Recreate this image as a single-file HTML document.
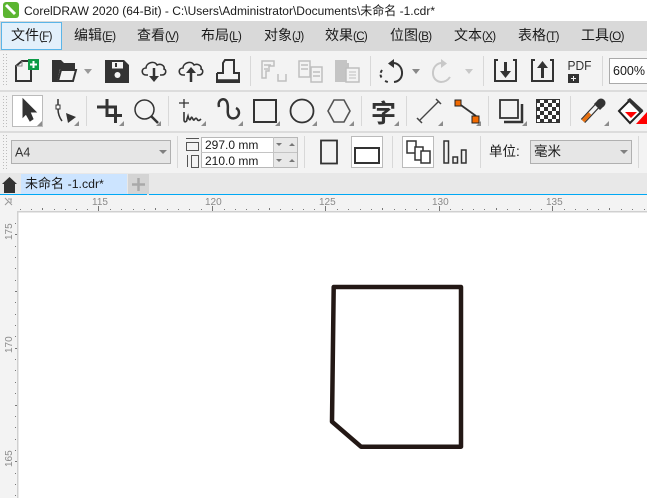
<!DOCTYPE html>
<html><head><meta charset="utf-8">
<style>
html,body{margin:0;padding:0;width:647px;height:498px;overflow:hidden;background:#fff}
svg{display:block}
text{font-family:"Liberation Sans","Noto Sans CJK SC",sans-serif;fill:#1a1a1a}
.m{font-size:14px}
.m tspan{font-size:11.5px;letter-spacing:-.6px}
.r{font-size:10px;fill:#8a8a8a}
</style></head><body>
<svg width="647" height="498" viewBox="0 0 647 498" xmlns="http://www.w3.org/2000/svg">
<defs>
<g id="c"><path d="M0 0h-5l5-5z" fill="#8c8c8c"/></g>
<pattern id="grip" width="3" height="3" patternUnits="userSpaceOnUse"><rect width="1" height="1" fill="#bdbdbd"/></pattern>
<pattern id="chk" x="536" y="99" width="8" height="8" patternUnits="userSpaceOnUse"><rect width="8" height="8" fill="#fff"/><rect width="4" height="4" fill="#333"/><rect x="4" y="4" width="4" height="4" fill="#333"/></pattern>
</defs>
<!-- title -->
<rect width="647" height="21" fill="#fff"/>
<rect x="3" y="2" width="16" height="16" rx="3" fill="#5cb531"/>
<path d="M6 5l9 9" stroke="#fff" stroke-width="3"/>
<text x="24" y="15" font-size="12.3" textLength="411" lengthAdjust="spacingAndGlyphs">CorelDRAW 2020 (64-Bit) - C:\Users\Administrator\Documents\未命名 -1.cdr*</text>
<!-- menu -->
<rect y="21" width="647" height="30" fill="#d9d9d9"/>
<rect x="1.500" y="22.500" width="60" height="27" fill="#e3f0fb" stroke="#5bb5e8"/>
<text class="m" x="11" y="40">文件<tspan>(F)</tspan></text>
<text class="m" x="74" y="40">编辑<tspan>(E)</tspan></text>
<text class="m" x="137" y="40">查看<tspan>(V)</tspan></text>
<text class="m" x="201" y="40">布局<tspan>(L)</tspan></text>
<text class="m" x="264" y="40">对象<tspan>(J)</tspan></text>
<text class="m" x="325" y="40">效果<tspan>(C)</tspan></text>
<text class="m" x="390" y="40">位图<tspan>(B)</tspan></text>
<text class="m" x="454" y="40">文本<tspan>(X)</tspan></text>
<text class="m" x="518" y="40">表格<tspan>(T)</tspan></text>
<text class="m" x="581" y="40">工具<tspan>(O)</tspan></text>
<path d="M41 41.500h6M105 41.500h6M168 41.500h7M232 41.500h5M295 41.500h4M356 41.500h8M421 41.500h7M485 41.500h7M549 41.500h6M612 41.500h9" stroke="#333" stroke-width="1"/>
<!-- toolbars bg -->
<rect y="51" width="647" height="122" fill="#f3f3f3"/>
<rect y="90" width="647" height="2" fill="#dcdcdc"/>
<rect y="131" width="647" height="2" fill="#dcdcdc"/>
<rect x="3" y="54" width="5" height="32" fill="url(#grip)"/>
<rect x="3" y="94" width="5" height="34" fill="url(#grip)"/>
<rect x="3" y="135" width="5" height="34" fill="url(#grip)"/>
<g stroke="#d8d8d8" stroke-width="1">
<path d="M250.500 56v30M370.500 56v30M483.500 56v30M602.500 56v30M86.500 96v30M168.500 96v30M361.500 96v30M406.500 96v30M488.500 96v30M570.500 96v30M177.500 136v32M304.500 136v32M392.500 136v32M480.500 136v32M638.500 136v32"/>
</g>
<!-- new -->
<path d="M16 81V66l6-5h9v20z" fill="none" stroke="#333" stroke-width="2"/>
<path d="M22 61v5h-6" fill="none" stroke="#888" stroke-width="1"/>
<rect x="28" y="59" width="11" height="11" fill="#0d9b46"/>
<path d="M33.500 61v7M30 64.500h7" stroke="#fff" stroke-width="2"/>
<!-- open -->
<path d="M52 82V60h9l3 3h11v6H60l-3 13z" fill="#333"/>
<path d="M58 81l3-11h15l-3 11z" fill="#f3f3f3" stroke="#333" stroke-width="2"/>
<path d="M84 69h8l-4 5z" fill="#999"/>
<!-- save -->
<path d="M105 60h19l5 5v18h-24z" fill="#333"/>
<rect x="112" y="62" width="11" height="6.500" fill="#f3f3f3"/><rect x="115" y="63" width="2" height="4" fill="#333"/>
<circle cx="117.500" cy="75" r="3" fill="#f3f3f3"/>
<!-- clouds -->
<g fill="none" stroke="#333" stroke-width="1.600"><path d="M148 75h-2c-5 0-5-7 0-7 0-5 8-8 11-3 4-2 8 1 7 4 3 1 2 6-2 6h-2"/></g>
<path d="M154 68v9" stroke="#333" stroke-width="2.500"/><path d="M149 76h10l-5 6z" fill="#333"/>
<g fill="none" stroke="#333" stroke-width="1.600"><path d="M185 75h-2c-5 0-5-7 0-7 0-5 8-8 11-3 4-2 8 1 7 4 3 1 2 6-2 6h-2"/></g>
<path d="M191 72v10" stroke="#333" stroke-width="2.500"/><path d="M186 73h10l-5-6z" fill="#333"/>
<!-- publish -->
<path d="M217 73v9h22v-9h-5V60h-9l-2 3v10h-6" fill="none" stroke="#333" stroke-width="2"/>
<path d="M217 80.500h22" stroke="#333" stroke-width="2.500"/>
<!-- disabled -->
<g fill="none" stroke="#bfbfbf" stroke-width="1.500">
<path d="M262 61h12v5h-5v5h-3v7h-4z"/><path d="M264 65h7M264 69h4"/>
<path d="M278 74v7h8v-7"/>
<path d="M299 61h11v16h-11zM311 67h11v15h-11z"/><path d="M301 65h7M301 69h7M313 72h7M313 76h7"/>
</g>
<path d="M335 60h12v3h2v19h-14z" fill="#c4c4c4"/><rect x="346" y="68" width="13" height="14" fill="#f3f3f3" stroke="#bfbfbf" stroke-width="1.500"/>
<path d="M349 72h7M349 75h7M349 78h7" stroke="#bfbfbf"/>
<!-- undo -->
<path d="M392 63c12-1 14 18 2 19" fill="none" stroke="#333" stroke-width="2"/>
<path d="M394 59v9l-6-4.500z" fill="#333"/>
<path d="M382 70c-2 3-2 6 0 8M385 81l4 1.500" fill="none" stroke="#333" stroke-width="2" stroke-dasharray="3 2"/>
<path d="M412 69h8l-4 5z" fill="#888"/>
<path d="M443 63c-12-1-14 18-2 19 4 0 7-2 9-5" fill="none" stroke="#c8c8c8" stroke-width="2"/>
<path d="M441 59v9l6-4.500z" fill="#c8c8c8"/>
<path d="M465 69h8l-4 5z" fill="#c8c8c8"/>
<!-- import/export -->
<path d="M498 60h-3v21h21V60h-3M535 60h-3v21h21V60h-3" fill="none" stroke="#333" stroke-width="2"/>
<path d="M505.500 62v10" stroke="#333" stroke-width="3"/><path d="M500 71h11l-5.500 7z" fill="#333"/>
<path d="M542.500 78V68" stroke="#333" stroke-width="3"/><path d="M537 68h11l-5.500-7z" fill="#333"/>
<text x="567.500" y="70" font-size="13" textLength="24" lengthAdjust="spacingAndGlyphs" style="fill:#333">PDF</text>
<path d="M568 74h11v9h-11z" fill="#333"/><path d="M573.500 76v5M571 78.500h5" stroke="#f3f3f3"/>
<!-- zoom box -->
<rect x="609.500" y="58.500" width="40" height="25" fill="#fff" stroke="#aaa"/>
<text x="613" y="75" font-size="12.500">600%</text>
<!-- tool row -->
<rect x="12.500" y="95.500" width="30" height="31" fill="#fff" stroke="#bbb"/>
<path d="M23 99l13 13h-6l3 7-3 2-4-7-3 3z" fill="#333" stroke="#333"/>
<use href="#c" x="42" y="126"/>
<rect x="56" y="105" width="4" height="4" fill="#fff" stroke="#333"/>
<path d="M58 99v6M58 109c0 4 1 8 4 12" fill="none" stroke="#333" stroke-width="1.500"/>
<path d="M66 113l10 4-8 6z" fill="#333"/>
<use href="#c" x="79" y="126"/>
<path d="M97 107h18.500v16M107 99v16.500h15" fill="none" stroke="#333" stroke-width="3"/>
<use href="#c" x="124" y="126"/>
<circle cx="144.500" cy="109.500" r="9.500" fill="none" stroke="#333" stroke-width="1.500"/>
<path d="M151 116l7 7" stroke="#333" stroke-width="2.500"/>
<use href="#c" x="161" y="126"/>
<path d="M179 103h10M184 99v9" stroke="#333" stroke-width="1.300"/>
<path d="M184 112v8c0 3 3 2 3-1l1-3c1 4 2 5 3 2 1-3 2 3 3 2s2-3 3-1 2 2 4 0" fill="none" stroke="#333" stroke-width="1.600"/>
<use href="#c" x="206" y="126"/>
<path d="M219 107c-2-8 6-10 8-5 2 5 0 8 1 12 1 6 10 6 11-1 0-2-1-4-3-5" fill="none" stroke="#333" stroke-width="2.500"/>
<use href="#c" x="243" y="126"/>
<rect x="254" y="100" width="22" height="22" fill="none" stroke="#333" stroke-width="2"/>
<use href="#c" x="280" y="126"/>
<circle cx="302" cy="111" r="11.500" fill="none" stroke="#333" stroke-width="1.800"/>
<use href="#c" x="317" y="126"/>
<path d="M334 100h10l6 11-6 11h-10l-6-11z" fill="none" stroke="#555" stroke-width="1.600"/>
<use href="#c" x="354" y="126"/>
<text x="371" y="122" font-size="25" font-weight="700" style="fill:#333">字</text>
<use href="#c" x="399" y="126"/>
<path d="M420 120l19-19" stroke="#444" stroke-width="1.300"/><path d="M417 118l5 5M436 99l5 5" stroke="#444" stroke-width="1.500"/>
<use href="#c" x="443" y="126"/>
<path d="M458 103l18 13" stroke="#333" stroke-width="1.800"/>
<rect x="455" y="100" width="6" height="6" fill="#f26a00" stroke="#222"/>
<rect x="472" y="116" width="7" height="7" fill="#f26a00" stroke="#222"/>
<use href="#c" x="481" y="126"/>
<rect x="500" y="100" width="18" height="18" fill="none" stroke="#333" stroke-width="1.800"/>
<path d="M522 104v18h-18" fill="none" stroke="#333" stroke-width="2.500"/>
<use href="#c" x="527" y="126"/>
<rect x="536" y="99" width="24" height="24" fill="url(#chk)"/>
<rect x="536.500" y="99.500" width="23" height="23" fill="none" stroke="#333"/>
<path d="M583 121l15-16" stroke="#333" stroke-width="6"/>
<path d="M583 121l15-16" stroke="#f3f3f3" stroke-width="3.500"/>
<path d="M583 121l7-7.500" stroke="#e8700f" stroke-width="3.500"/>
<circle cx="601" cy="103" r="4.500" fill="#333"/>
<path d="M594 104l4-4 6 6-4 4z" fill="#333"/>
<use href="#c" x="609" y="126"/>
<path d="M619 111l11-11 12 11-12 12z" fill="#fff" stroke="#222" stroke-width="2"/>
<path d="M627 100l3-2 13 12-3 3z" fill="#333"/>
<path d="M625 112h12l-6 6z" fill="#f00"/>
<path d="M647 112v12h-11z" fill="#f00"/>
<!-- row 3 -->
<rect x="11.500" y="140.500" width="159" height="23" fill="#e6e6e6" stroke="#b0b0b0"/>
<text x="15" y="156.500" font-size="12.500" style="fill:#333">A4</text>
<path d="M159 150h8l-4 4z" fill="#808080"/>
<path d="M186 138.500h13" stroke="#555"/><rect x="186.500" y="142.500" width="12" height="8" fill="none" stroke="#555" stroke-width="1"/>
<path d="M187.500 155v12" stroke="#555"/><rect x="191.500" y="155.500" width="7" height="12" fill="none" stroke="#555"/>
<rect x="201.500" y="137.500" width="96" height="30" fill="#e8e8e8" stroke="#b8b8b8"/>
<rect x="202" y="138" width="71" height="29" fill="#fff"/>
<path d="M201 152.500h96M273.500 137v31" stroke="#c4c4c4"/>
<text x="205" y="149" font-size="12">297.0 mm</text>
<text x="205" y="165" font-size="12">210.0 mm</text>
<path d="M276 143h6l-3 3zM289 146h6l-3-3zM276 159h6l-3 3zM289 162h6l-3-3z" fill="#777"/>
<rect x="321" y="140.500" width="16" height="23" fill="none" stroke="#333" stroke-width="1.800"/>
<rect x="351.500" y="136.500" width="31" height="31" fill="#fff" stroke="#bbb"/>
<rect x="355" y="148" width="24" height="15" fill="none" stroke="#333" stroke-width="2"/>
<rect x="402.500" y="136.500" width="31" height="31" fill="#fff" stroke="#bbb"/>
<rect x="407" y="141" width="9" height="12" fill="#fff" stroke="#333" stroke-width="1.500"/>
<rect x="415" y="147" width="8" height="13" fill="#fff" stroke="#333" stroke-width="1.500"/>
<rect x="421" y="151" width="9" height="12" fill="#fff" stroke="#333" stroke-width="1.500"/>
<rect x="444" y="141" width="4.500" height="22" fill="none" stroke="#333" stroke-width="1.500"/>
<rect x="453" y="157" width="4.500" height="6" fill="none" stroke="#333" stroke-width="1.500"/>
<rect x="461.500" y="150" width="4.500" height="13" fill="none" stroke="#333" stroke-width="1.500"/>
<text x="489" y="156" font-size="13.500">单位:</text>
<rect x="530.500" y="140.500" width="101" height="23" fill="#e6e6e6" stroke="#b0b0b0"/>
<text x="534" y="156" font-size="13.500">毫米</text>
<path d="M620 150h8l-4 4z" fill="#808080"/>
<!-- tabs -->
<rect y="173" width="647" height="22" fill="#e8e8e8"/>
<path d="M2 184l7.500-7 7.500 7h-2v9H4v-9z" fill="#333"/>
<rect x="21" y="174" width="106" height="20" fill="#cce4ff"/>
<rect x="128" y="174" width="21" height="20" fill="#d4d4d4"/>
<path d="M138.500 178v13M132 184.500h13" stroke="#a9a9a9" stroke-width="2.500"/>
<text x="25" y="188" font-size="13">未命名 <tspan font-size="12.300">-1.cdr*</tspan></text>
<rect y="194" width="147" height="1" fill="#00a8f4"/><rect x="149" y="194" width="498" height="1" fill="#00a8f4"/>
<!-- rulers -->
<rect y="195" width="647" height="17" fill="#f3f3f3"/>
<rect y="195" width="18" height="303" fill="#f3f3f3"/>
<rect x="17" y="211" width="630" height="1.500" fill="#d0d0d0"/>
<rect x="17" y="211" width="1.500" height="287" fill="#d0d0d0"/>
<path d="M5 198l7 7M5 205l4-4M8 199h4M11 199v4" stroke="#999" stroke-width="1" fill="none"/>
<g fill="#777">
<path d="M20 209h1v1h-1zM31 209h1v1h-1zM54 209h1v1h-1zM65 209h1v1h-1zM76 209h1v1h-1zM87 209h1v1h-1zM110 209h1v1h-1zM121 209h1v1h-1zM133 209h1v1h-1zM144 209h1v1h-1zM167 209h1v1h-1zM178 209h1v1h-1zM189 209h1v1h-1zM201 209h1v1h-1zM224 209h1v1h-1zM235 209h1v1h-1zM246 209h1v1h-1zM258 209h1v1h-1zM280 209h1v1h-1zM292 209h1v1h-1zM303 209h1v1h-1zM314 209h1v1h-1zM337 209h1v1h-1zM348 209h1v1h-1zM360 209h1v1h-1zM371 209h1v1h-1zM394 209h1v1h-1zM405 209h1v1h-1zM416 209h1v1h-1zM428 209h1v1h-1zM450 209h1v1h-1zM462 209h1v1h-1zM473 209h1v1h-1zM484 209h1v1h-1zM507 209h1v1h-1zM519 209h1v1h-1zM530 209h1v1h-1zM541 209h1v1h-1zM564 209h1v1h-1zM575 209h1v1h-1zM587 209h1v1h-1zM598 209h1v1h-1zM621 209h1v1h-1zM632 209h1v1h-1zM644 209h1v1h-1z"/>
<path d="M42 208h1v2h-1zM155 208h1v2h-1zM269 208h1v2h-1zM382 208h1v2h-1zM496 208h1v2h-1zM609 208h1v2h-1z"/>
<path d="M98 206h1v5h-1zM212 206h1v5h-1zM325 206h1v5h-1zM439 206h1v5h-1zM552 206h1v5h-1z"/>
<path d="M15 234h2v1h-2zM15 348h2v1h-2zM15 461h2v1h-2z"/>
<path d="M15 291h2v1h-2zM15 405h2v1h-2z"/>
<path d="M15 223h1v1h-1zM15 246h1v1h-1zM15 257h1v1h-1zM15 268h1v1h-1zM15 280h1v1h-1zM15 302h1v1h-1zM15 314h1v1h-1zM15 325h1v1h-1zM15 336h1v1h-1zM15 359h1v1h-1zM15 370h1v1h-1zM15 382h1v1h-1zM15 393h1v1h-1zM15 416h1v1h-1zM15 427h1v1h-1zM15 439h1v1h-1zM15 450h1v1h-1zM15 473h1v1h-1zM15 484h1v1h-1zM15 495h1v1h-1z"/>
</g>
<text class="r" x="92" y="205">115</text>
<text class="r" x="205" y="205">120</text>
<text class="r" x="319" y="205">125</text>
<text class="r" x="432" y="205">130</text>
<text class="r" x="546" y="205">135</text>
<text class="r" transform="translate(12 240) rotate(-90)">175</text>
<text class="r" transform="translate(12 353) rotate(-90)">170</text>
<text class="r" transform="translate(12 467) rotate(-90)">165</text>
<!-- shape -->
<path d="M333.700 287H461V446.700H361L332 421.700z" fill="none" stroke="#231815" stroke-width="4.500" stroke-linejoin="round"/>
</svg>
</body></html>
